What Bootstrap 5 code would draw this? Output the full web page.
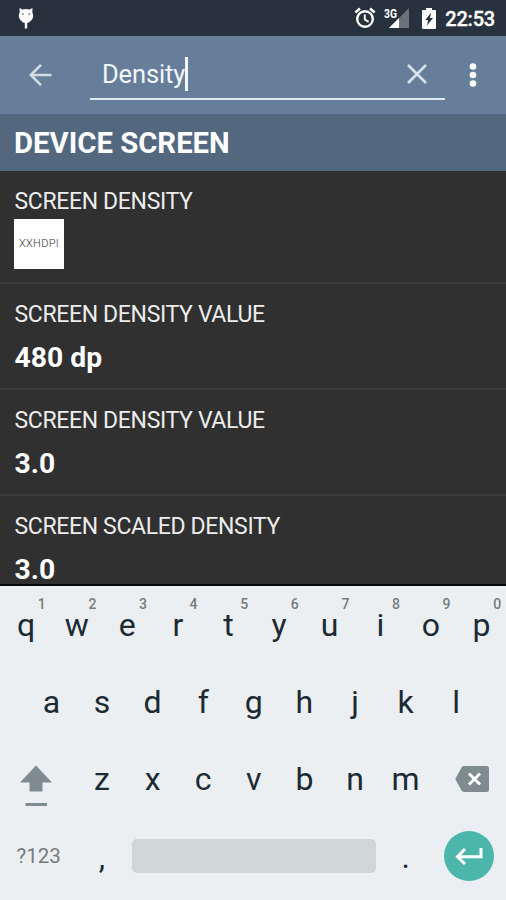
<!DOCTYPE html>
<html lang="en">
<head>
<meta charset="utf-8">
<meta name="viewport" content="width=device-width, initial-scale=1">
<title>Device info search</title>
<link href="https://cdn.jsdelivr.net/npm/bootstrap@5.3.0/dist/css/bootstrap.min.css" rel="stylesheet">
<style>
  body { font-family: Roboto, "Noto Sans", sans-serif; background: #303030; height: 900px; overflow: hidden; }
  svg { display: block; flex: none; }
  .status-bar { height: 36px; background: #28323e; padding: 0 11px 0 17px; }
  .signal { margin-left: 8px; }
  .battery { margin-left: 12px; }
  .status-clock { font-size: 20px; font-weight: 500; line-height: 36px; margin-left: 9px; padding-top: 2px; letter-spacing: -.2px; -webkit-text-stroke: .3px #fff; }
  .app-bar { height: 78px; background: #667e99; padding: 0 29px 0 25px; }
  .search-field { width: 355px; height: 47px; margin-left: 37px; margin-top: 3px; border-bottom: 2px solid #dfe9f5; padding: 0 17px 3px 12px; color: #f2f7fc; }
  .search-text { font-size: 25.5px; line-height: 36px; letter-spacing: -.15px; }
  .caret { width: 2.5px; height: 34px; background: #f2f7fc; }
  .section-head { height: 57px; background: #53677e; font-size: 29.3px; line-height: 57px; font-weight: 700; padding-left: 14px; margin: 0; color: #fbfdff; padding-top: 1px; }
  .results { height: 415px; background: #303030; border-bottom: 2px solid #080808; }
  .result { height: 106px; padding: 17px 14px 0; border-bottom: 2px solid #3a3a3a; flex: none; }
  .result.with-image { height: 113px; }
  .result-label { font-size: 23px; line-height: 28px; color: #ededed; letter-spacing: -.35px; padding-left: .5px; }
  .result-value { font-size: 28.3px; line-height: 34px; margin-top: 12px; font-weight: 700; color: #fff; padding-left: .5px; }
  .density-tile { width: 50px; height: 50px; margin-top: 3px; background: #fff; color: #333; font-size: 11px; font-weight: 300; padding-top: 1px; }
  .density-text { letter-spacing: .3px; }
  .keyboard { height: 314px; background: #eceff1; color: #1b2a33; }
  .key-row { display: grid; grid-template-columns: repeat(20, 1fr); height: 77.2px; padding-left: .8px; margin-right: -.8px; }
  .key { grid-column: span 2; display: flex; align-items: center; justify-content: center; position: relative; font-size: 32px; line-height: 1; }
  .key.wide { grid-column: span 3; }
  .key.space { grid-column: span 10; }
  .key.offset-key { grid-column: 2 / span 2; }
  .key.low { padding-top: 2px; }
  .key.shift { justify-content: flex-start; padding-left: 19px; }
  .key.erase { justify-content: flex-end; padding-right: 18px; }
  .key-hint { position: absolute; top: 11px; left: 37px; font-size: 14px; font-weight: 500; color: #757d80; }
  .key-mode { font-size: 20.5px; color: #747c80; }
  .space-fill { width: 244px; height: 34px; background: #d0d5d7; border-radius: 5px; }
  .enter-disc { width: 50px; height: 50px; background: #4db6ac; }
</style>
<script src="https://cdn.jsdelivr.net/npm/bootstrap@5.3.0/dist/js/bootstrap.bundle.min.js"></script>
</head>
<body class="d-flex flex-column">
  <header>
    <div class="status-bar d-flex align-items-center text-white">
      <svg width="18" height="24" viewBox="0 0 18 24"><path d="M2.500 2l3 1.600Q9 2.600 12.500 3.600L15.500 2l-.2 4.500Q17.300 10 15 13.500 13 16.500 10.200 17V22.500H7.800V17Q5 16.500 3 13.500.700 10 2.700 6.500z" fill="#fff"/><circle cx="5.800" cy="8" r="1.100" fill="#8b9198"/><circle cx="12.200" cy="8" r="1.100" fill="#8b9198"/></svg>
      <svg class="ms-auto" width="22" height="22" viewBox="0 0 22 22" fill="none" stroke="#fff"><circle cx="11" cy="12" r="7.800" stroke-width="2.400"/><path d="M1.300 5.500L6 1.500M20.700 5.500L16 1.500" stroke-width="2.400"/><path d="M10.800 7.500v5l3.800 2.400" stroke-width="1.900"/></svg>
      <svg width="26" height="22" viewBox="0 0 26 22" class="signal"><path d="M25 1v20H5z" fill="#6a727a"/><path d="M15 11v10H5z" fill="#fff"/><path d="M0 0h13.500v11H0z" fill="#28323e"/><text x="0" y="10.500" font-family="Roboto, sans-serif" font-size="12" font-weight="700" fill="#fff" textLength="13" lengthAdjust="spacingAndGlyphs">3G</text></svg>
      <svg class="battery" width="14" height="21" viewBox="0 0 14 21"><path d="M4 0h6v2h3q1 0 1 1v17q0 1-1 1H1q-1 0-1-1V3q0-1 1-1h3z" fill="#fff"/><path d="M9.200 4.500L3.300 12H6.200L5 17.500 11 10H8z" fill="#28323e"/></svg>
      <span class="status-clock">22:53</span>
    </div>
    <div class="app-bar d-flex align-items-center">
      <svg width="28" height="24" viewBox="0 0 28 24" fill="none" stroke="#d3dce6" stroke-width="2.600"><path d="M26.500 12H5.500M16 1.800L5.800 12 16 22.200"/></svg>
      <div class="search-field d-flex align-items-center">
        <span class="search-text">Density</span><span class="caret"></span>
        <svg class="ms-auto" width="22" height="20" viewBox="0 0 22 20" stroke="#d8e2ed" stroke-width="2.600"><path d="M2 1l18 18M20 1L2 19"/></svg>
      </div>
      <svg class="ms-auto" width="8" height="26" viewBox="0 0 8 26" fill="#fff"><circle cx="4" cy="4.500" r="3.300"/><circle cx="4" cy="13" r="3.300"/><circle cx="4" cy="21.500" r="3.300"/></svg>
    </div>
  </header>

  <h1 class="section-head">DEVICE SCREEN</h1>
  <main class="results overflow-hidden d-flex flex-column">
    <div class="result with-image">
      <div class="result-label">SCREEN DENSITY</div>
      <div class="density-tile d-flex align-items-center justify-content-center"><span class="density-text">XXHDPI</span></div>
    </div>
    <div class="result"><div class="result-label">SCREEN DENSITY VALUE</div><div class="result-value">480 dp</div></div>
    <div class="result"><div class="result-label">SCREEN DENSITY VALUE</div><div class="result-value">3.0</div></div>
    <div class="result"><div class="result-label">SCREEN SCALED DENSITY</div><div class="result-value">3.0</div></div>
  </main>

  <section class="keyboard">
    <div class="key-row">
      <div class="key">q<span class="key-hint">1</span></div><div class="key">w<span class="key-hint">2</span></div><div class="key">e<span class="key-hint">3</span></div><div class="key">r<span class="key-hint">4</span></div><div class="key">t<span class="key-hint">5</span></div><div class="key">y<span class="key-hint">6</span></div><div class="key">u<span class="key-hint">7</span></div><div class="key">i<span class="key-hint">8</span></div><div class="key">o<span class="key-hint">9</span></div><div class="key">p<span class="key-hint">0</span></div>
    </div>
    <div class="key-row">
      <div class="key offset-key">a</div><div class="key">s</div><div class="key">d</div><div class="key">f</div><div class="key">g</div><div class="key">h</div><div class="key">j</div><div class="key">k</div><div class="key">l</div>
    </div>
    <div class="key-row">
      <div class="key wide shift"><svg width="34" height="54" viewBox="0 0 34 54" fill="#7f8b8f"><path d="M16 13.500L32 30.500H22.500V39.500H9.500V30.500H0z"/><path d="M5.500 51h21.500v3H5.500z"/></svg></div>
      <div class="key">z</div><div class="key">x</div><div class="key">c</div><div class="key">v</div><div class="key">b</div><div class="key">n</div><div class="key">m</div>
      <div class="key wide erase"><svg width="34" height="26" viewBox="0 0 34 26"><path d="M9 0H31.500q2.500 0 2.500 2.500v21Q34 26 31.500 26H9Q7.500 26 6.500 24.600L.3 13 6.500 1.400Q7.500 0 9 0z" fill="#7f8b8f"/><path d="M14 7.500l11 11M25 7.500L14 18.500" stroke="#fff" stroke-width="3"/></svg></div>
    </div>
    <div class="key-row">
      <div class="key wide key-mode">?123</div>
      <div class="key low">,</div>
      <div class="key space"><div class="space-fill"></div></div>
      <div class="key low">.</div>
      <div class="key wide"><div class="enter-disc rounded-circle d-flex align-items-center justify-content-center"><svg width="28" height="18" viewBox="0 0 28 18" fill="none" stroke="#fff" stroke-width="3"><path d="M26 1v8.800H3M10 2L2.500 9.800 10 17"/></svg></div></div>
    </div>
  </section>
</body>
</html>
